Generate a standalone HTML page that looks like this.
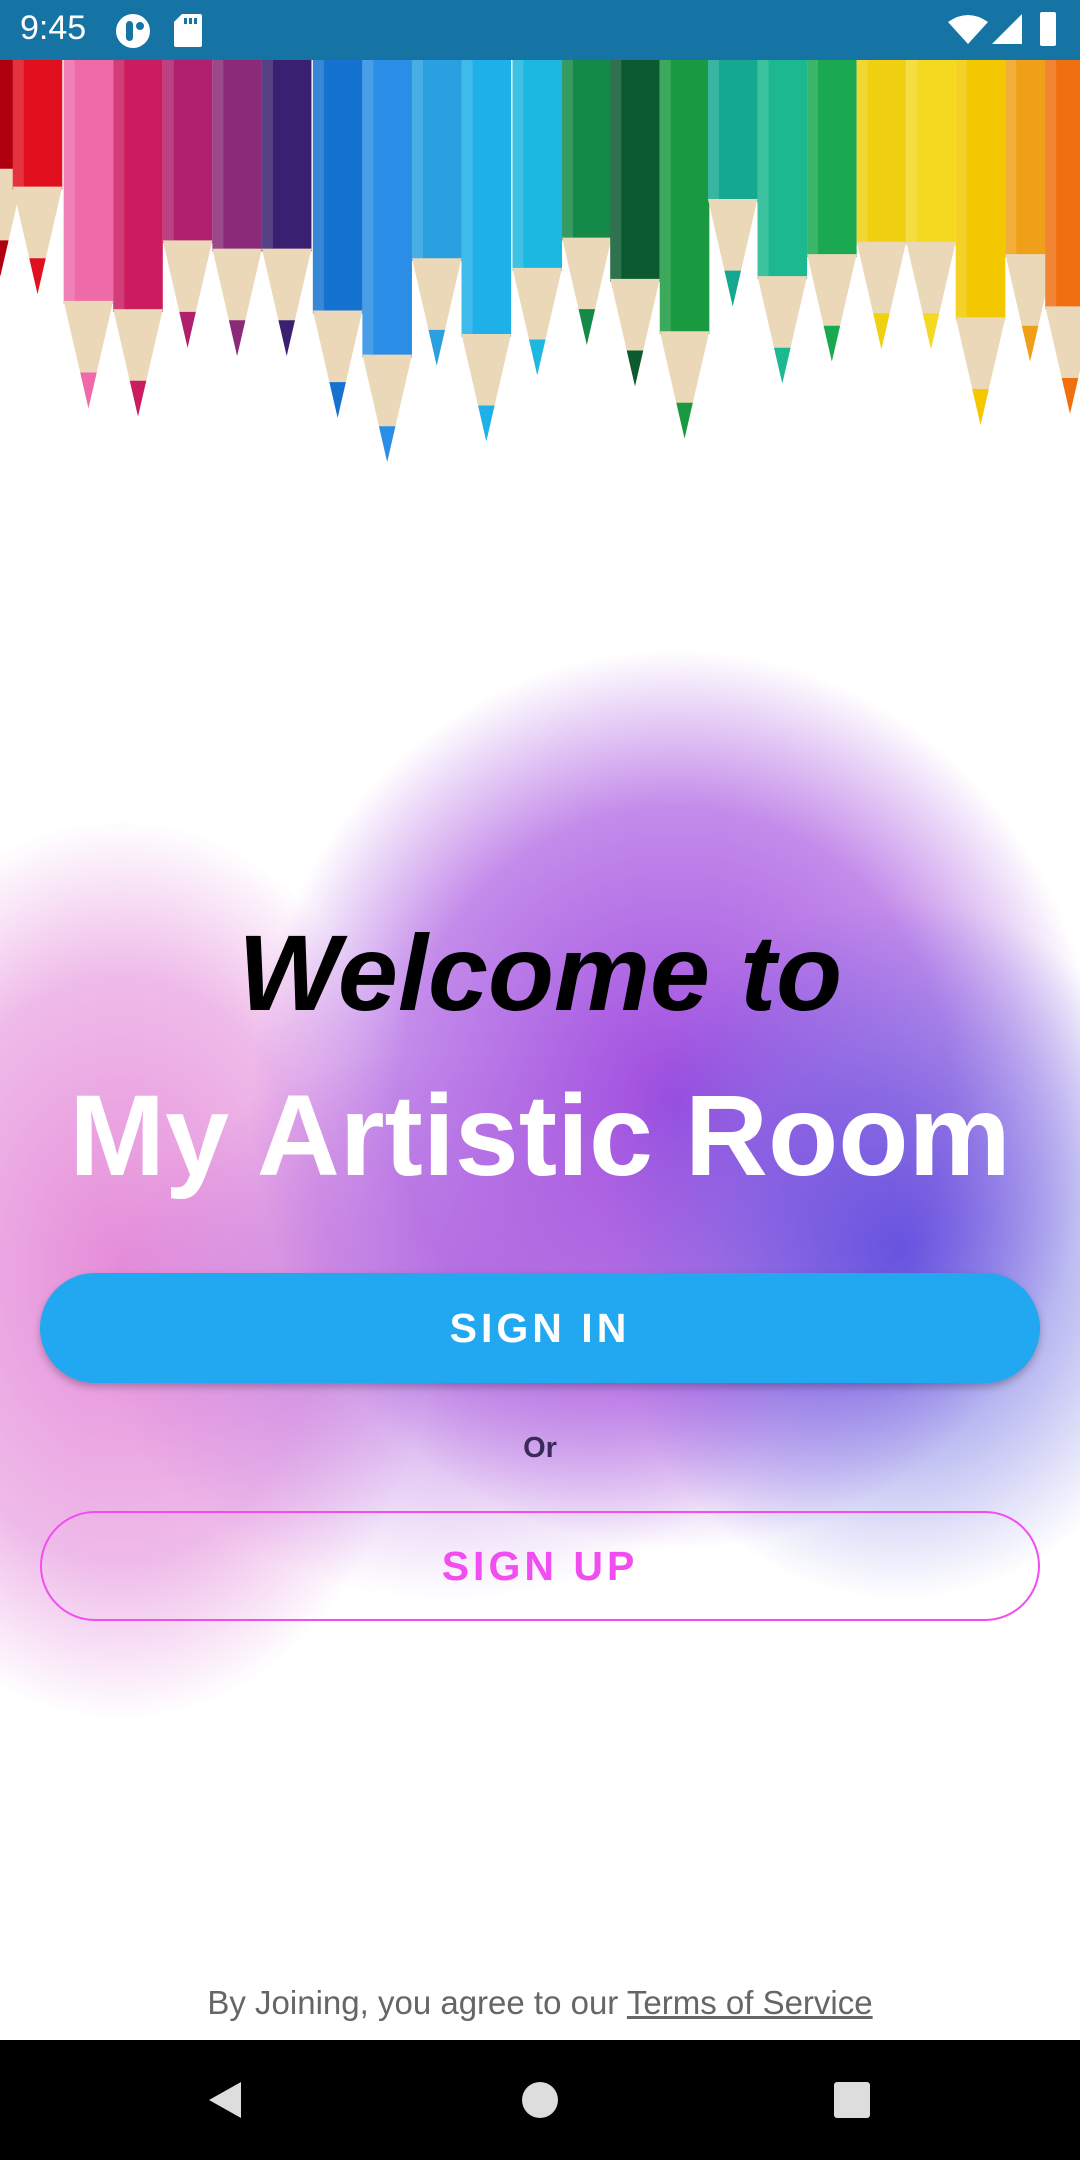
<!DOCTYPE html>
<html><head><meta charset="utf-8"><style>
html,body{margin:0;padding:0;}
body{width:1080px;height:2160px;position:relative;overflow:hidden;background:#fff;font-family:"Liberation Sans",sans-serif;}
.status{position:absolute;left:0;top:0;width:1080px;height:60px;background:#1674a5;color:#fff;}
.abs{position:absolute;}
.splash{position:absolute;border-radius:50%;}
.t{position:absolute;left:0;width:1080px;text-align:center;}
</style></head><body>
<div class="status">
 <div class="abs" style="left:20px;top:9px;font-size:34px;">9:45</div>
 <div class="abs" style="left:116px;top:14px;width:34px;height:34px;border-radius:50%;background:#fff;"></div>
 <div class="abs" style="left:126px;top:21px;width:7px;height:20px;border-radius:4px;background:#1674a5;"></div>
 <div class="abs" style="left:136px;top:22px;width:8px;height:8px;border-radius:50%;background:#1674a5;"></div>
 <svg class="abs" style="left:174px;top:14px" width="28" height="34"><path d="M8 0H26a2 2 0 0 1 2 2V31a2 2 0 0 1-2 2H2a2 2 0 0 1-2-2V8Z" fill="#fff"/><rect x="10" y="4" width="3" height="6" fill="#1674a5"/><rect x="15" y="4" width="3" height="6" fill="#1674a5"/><rect x="20" y="4" width="3" height="6" fill="#1674a5"/></svg>
 <svg class="abs" style="left:948px;top:14px" width="40" height="32"><path d="M20 30L0 8Q20 -6 40 8Z" fill="#fff"/></svg>
 <svg class="abs" style="left:992px;top:14px" width="32" height="32"><path d="M30 0V30H0Z" fill="#fff"/></svg>
 <div class="abs" style="left:1040px;top:12px;width:16px;height:34px;background:#fff;border-radius:2px;"></div>
</div>
<svg class="abs" style="left:0;top:60px" width="1080" height="413" viewBox="0 43 784 300">
<g id="p"></g>
</svg>
<div class="splash" style="left:-200px;top:820px;width:640px;height:900px;background:radial-gradient(closest-side,rgba(225,120,210,.85),rgba(225,130,215,.55) 65%,rgba(230,150,220,0));"></div>
<div class="splash" style="left:250px;top:650px;width:850px;height:900px;background:radial-gradient(closest-side,rgba(150,60,220,.92),rgba(170,90,225,.7) 65%,rgba(190,130,230,0));"></div>
<div class="splash" style="left:600px;top:900px;width:600px;height:700px;background:radial-gradient(closest-side,rgba(80,70,220,.8),rgba(100,100,225,.4) 60%,rgba(120,120,230,0));"></div>
<div class="splash" style="left:100px;top:1050px;width:700px;height:550px;background:radial-gradient(closest-side,rgba(170,90,220,.7),rgba(180,110,225,0));"></div>
<div class="t" style="top:903px;font-size:108px;font-weight:bold;font-style:italic;color:#000;line-height:140px;">Welcome to</div>
<div class="t" style="top:1066px;font-size:115px;font-weight:bold;color:#fff;line-height:140px;">My Artistic Room</div>
<div class="abs" style="left:40px;top:1273px;width:1000px;height:110px;border-radius:55px;background:#22a8f0;box-shadow:0 4px 8px rgba(0,0,0,.25);color:#fff;font-size:41px;font-weight:bold;letter-spacing:4px;text-align:center;line-height:110px;">SIGN IN</div>
<div class="t" style="top:1432px;font-size:29px;font-weight:bold;color:#3a2a5a;">Or</div>
<div class="abs" style="left:40px;top:1511px;width:996px;height:106px;border-radius:55px;border:2px solid #f24df0;color:#f24df0;font-size:41px;font-weight:bold;letter-spacing:4px;text-align:center;line-height:106px;">SIGN UP</div>
<div class="t" style="top:1984px;font-size:33px;color:#666;">By Joining, you agree to our <u>Terms of Service</u></div>
<div class="abs" style="left:0;top:2040px;width:1080px;height:120px;background:#000;">
 <svg class="abs" style="left:205px;top:40px" width="40" height="40"><path d="M36 2V38L4 20Z" fill="#ddd"/></svg>
 <div class="abs" style="left:522px;top:42px;width:36px;height:36px;border-radius:50%;background:#ddd;"></div>
 <div class="abs" style="left:834px;top:42px;width:36px;height:36px;border-radius:3px;background:#ddd;"></div>
</div>
<script>
var d=[[0,200,"#b00010"],[27,213,"#e0101e"],[64,296,"#ee6aa8"],[100,302,"#cc1c60"],[136,252,"#b0206e"],[172,258,"#8a2a78"],[208,258,"#3a2070"],[245,303,"#1672d0"],[281,335,"#2a8ee6"],[317,265,"#2aa0e0"],[353,320,"#1eb0e8"],[390,272,"#1cb8e0"],[426,250,"#138a48"],[461,280,"#0c5a30"],[497,318,"#1a9a40"],[532,222,"#14a890"],[568,278,"#1cb890"],[604,262,"#1aa850"],[640,253,"#f0d010"],[676,253,"#f5d820"],[712,308,"#f4c800"],[748,262,"#f0a018"],[777,300,"#f07010"]];
var s="";d.forEach(function(p){var c=p[0],t=p[1],b=t-78;
s+='<rect x="'+(c-18)+'" y="43" width="36" height="'+(b-43+2)+'" fill="'+p[2]+'"/>';
s+='<rect x="'+(c-18)+'" y="43" width="8" height="'+(b-43)+'" fill="rgba(255,255,255,.15)"/>';
s+='<polygon points="'+(c-18)+','+b+' '+(c+18)+','+b+' '+c+','+t+'" fill="#ead8b8"/>';
s+='<polygon points="'+(c-6)+','+(t-26)+' '+(c+6)+','+(t-26)+' '+c+','+t+'" fill="'+p[2]+'"/>';});
document.getElementById("p").innerHTML=s;
</script>
</body></html>
